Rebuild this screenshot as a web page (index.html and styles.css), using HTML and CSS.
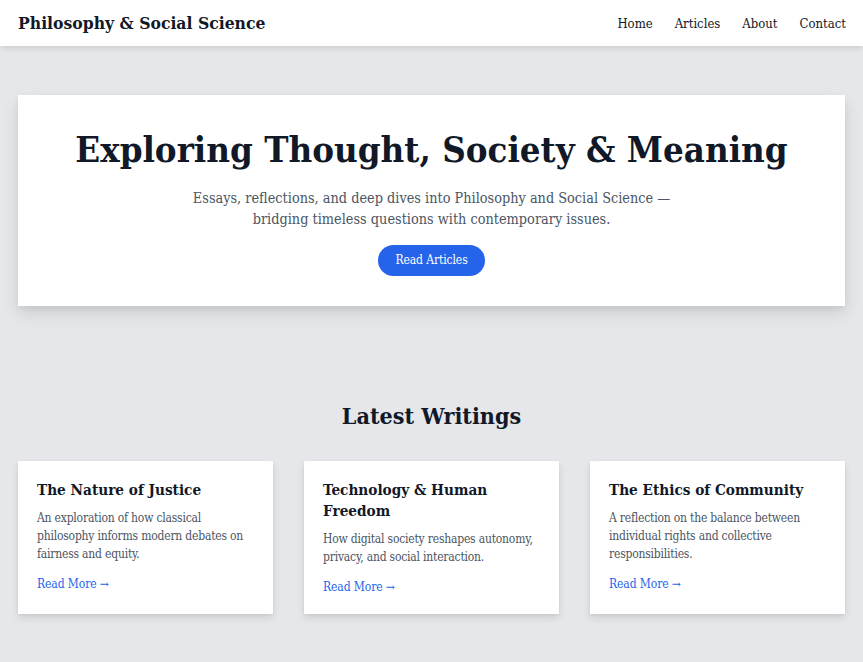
FILE: index.html
```html
<!DOCTYPE html>
<html lang="en">
<head>
<meta charset="utf-8">
<title>Philosophy &amp; Social Science</title>
<link rel="stylesheet" href="styles.css">
</head>
<body>
<header class="nav">
  <div class="brand">Philosophy &amp; Social Science</div>
  <nav class="links">
    <a href="#">Home</a>
    <a href="#">Articles</a>
    <a href="#">About</a>
    <a href="#">Contact</a>
  </nav>
</header>
<main class="main">
  <section class="hero">
    <h1 class="hero-title">Exploring Thought, Society &amp; Meaning</h1>
    <p class="hero-sub">Essays, reflections, and deep dives into Philosophy and Social Science — bridging timeless questions with contemporary issues.</p>
    <a class="btn" href="#">Read Articles</a>
  </section>
  <section class="latest">
    <h2 class="latest-title">Latest Writings</h2>
    <div class="grid">
      <article class="card">
        <h3 class="card-title">The Nature of Justice</h3>
        <p class="card-text">An exploration of how classical philosophy informs modern debates on fairness and equity.</p>
        <a class="card-link" href="#">Read More →</a>
      </article>
      <article class="card">
        <h3 class="card-title">Technology &amp; Human Freedom</h3>
        <p class="card-text">How digital society reshapes autonomy, privacy, and social interaction.</p>
        <a class="card-link" href="#">Read More →</a>
      </article>
      <article class="card">
        <h3 class="card-title">The Ethics of Community</h3>
        <p class="card-text">A reflection on the balance between individual rights and collective responsibilities.</p>
        <a class="card-link" href="#">Read More →</a>
      </article>
    </div>
  </section>
</main>
</body>
</html>
```
FILE: styles.css
```css
* { box-sizing: border-box; }
html, body { margin: 0; padding: 0; }
body {
  background: #e5e7eb;
  font-family: "DejaVu Serif", serif;
  font-stretch: condensed;
  color: #111827;
  overflow: hidden;
}
a { text-decoration: none; }

.nav {
  background: #fff;
  height: 46px;
  padding: 0 17px 0 18px;
  display: flex;
  align-items: center;
  justify-content: space-between;
  box-shadow: 0 2px 6px rgba(0,0,0,0.12);
  position: relative;
}
.brand {
  font-size: 17.4px;
  font-weight: bold;
  color: #111827;
}
.links { display: flex; gap: 22px; }
.links a {
  color: #111827;
  font-size: 13px;
}

.main { padding: 49px 18px 40px; }

.hero {
  background: #fff;
  box-shadow: 0 8px 16px rgba(0,0,0,0.10), 0 3px 6px rgba(0,0,0,0.06);
  padding: 35px 20px 30px;
  text-align: center;
  display: flex;
  flex-direction: column;
  align-items: center;
}
.hero-title {
  margin: 0;
  font-size: 36.3px;
  line-height: 40px;
  font-weight: bold;
  color: #111827;
}
.hero-sub {
  margin: 18px 0 15px;
  max-width: 500px;
  font-size: 14.35px;
  line-height: 21px;
  color: #4b5563;
}
.btn {
  display: inline-block;
  background: #2563eb;
  color: #fff;
  font-size: 12px;
  letter-spacing: -0.1px;
  height: 31px;
  line-height: 31px;
  padding: 0 17px;
  border-radius: 999px;
}

.latest { margin-top: 94px; }
.latest-title {
  margin: 0 0 29px;
  text-align: center;
  font-size: 23.1px;
  line-height: 32px;
  font-weight: bold;
}
.grid {
  display: grid;
  grid-template-columns: repeat(3, 1fr);
  gap: 31px;
}
.card {
  background: #fff;
  padding: 19px 19px 18px;
  box-shadow: 0 4px 8px rgba(0,0,0,0.10), 0 1px 3px rgba(0,0,0,0.06);
}
.card-title {
  margin: 0;
  font-size: 15.2px;
  line-height: 21px;
  font-weight: bold;
}
.card-text {
  margin: 8px 0 12px;
  font-size: 12px;
  letter-spacing: -0.2px;
  line-height: 18px;
  color: #4b5563;
}
.card-link {
  display: block;
  font-size: 12px;
  letter-spacing: -0.1px;
  line-height: 18px;
  color: #2563eb;
}
```
